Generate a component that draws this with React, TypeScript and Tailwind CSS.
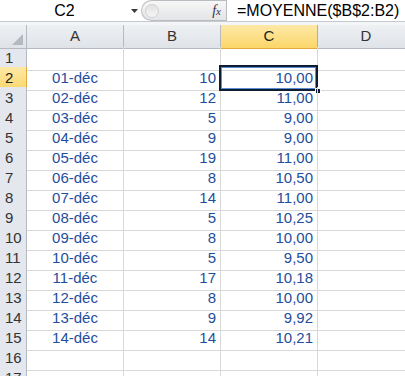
import React from 'react';

const rows: [string, string, string][] = [
  ['', '', ''],
  ['01-déc', '10', '10,00'],
  ['02-déc', '12', '11,00'],
  ['03-déc', '5', '9,00'],
  ['04-déc', '9', '9,00'],
  ['05-déc', '19', '11,00'],
  ['06-déc', '8', '10,50'],
  ['07-déc', '14', '11,00'],
  ['08-déc', '5', '10,25'],
  ['09-déc', '8', '10,00'],
  ['10-déc', '5', '9,50'],
  ['11-déc', '17', '10,18'],
  ['12-déc', '8', '10,00'],
  ['13-déc', '9', '9,92'],
  ['14-déc', '14', '10,21'],
  ['', '', ''],
  ['', '', ''],
];

const cols = ['A', 'B', 'C', 'D'];

export default function App() {
  return (
    <div
      className="w-[405px] h-[376px] overflow-hidden bg-white text-[15px]"
      style={{ fontFamily: '"Liberation Sans", Arial, sans-serif' }}
    >
      {/* formula bar */}
      <div className="flex h-[22px] items-stretch border-b border-[#c6cad0] bg-white">
        <div className="flex w-[127px] items-center justify-center pl-[2px] text-[16px] text-black">C2</div>
        <div className="flex w-[14px] items-center justify-center">
          <svg width="7" height="4" viewBox="0 0 7 4">
            <path d="M0 0h7L3.5 4z" fill="#3a3a3a" />
          </svg>
        </div>
        <div className="flex w-[85px] items-center justify-between rounded-l-[11px] border border-r-0 border-[#b9bcc1] bg-gradient-to-b from-[#f7f7f7] to-[#e3e4e6] pl-[3px] pr-[5px]">
          <div className="h-[14px] w-[14px] rounded-full bg-gradient-to-b from-[#e2e2e2] to-[#f6f6f6] border border-[#d2d2d2]" />
          <span
            className="text-[14px] italic text-[#3d2b4f]"
            style={{ fontFamily: '"Liberation Serif", serif' }}
          >
            f<span className="text-[11px]">x</span>
          </span>
        </div>
        <div className="flex flex-1 items-center border-l border-[#b9bcc1] pl-[10px] text-[16px] text-black whitespace-nowrap">
          =MOYENNE($B$2:B2)
        </div>
      </div>
      <div className="h-[3px] bg-[#f4f5f7]" />

      {/* column headers */}
      <div className="grid grid-cols-[27px_97px_97px_97px_97px] h-[22px]">
        <div className="relative border-r border-b border-[#b5bac1] bg-gradient-to-b from-[#eef0f3] to-[#dfe3e8]">
          <svg className="absolute right-[3px] bottom-[3px]" width="11" height="11" viewBox="0 0 11 11">
            <path d="M11 0V11H0z" fill="#b4b9c0" />
          </svg>
        </div>
        {cols.map(c => (
          <div
            key={c}
            className={
              c === 'C'
                ? 'flex items-center justify-center border-r border-b border-[#e3a93b] bg-gradient-to-b from-[#fde9a6] to-[#fbd668] text-[#222]'
                : 'flex items-center justify-center border-r border-b border-[#b5bac1] bg-gradient-to-b from-[#eef0f3] to-[#dfe3e8] text-[#333]'
            }
          >
            {c}
          </div>
        ))}
      </div>

      {/* rows */}
      {rows.map((r, i) => {
        const n = i + 1;
        const sel = n === 2;
        return (
          <div key={n} className="grid grid-cols-[27px_97px_97px_97px_97px] h-[20px]">
            <div
              className={
                sel
                  ? 'flex items-center pl-[5px] border-r border-b border-[#e3a93b] bg-gradient-to-b from-[#fde9a6] to-[#fbd668] text-[#222]'
                  : 'flex items-center pl-[5px] border-r border-b border-[#b5bac1] bg-[#e4e8ee] text-[#333]'
              }
            >
              {n}
            </div>
            <div className="flex items-center justify-center border-r border-b border-[#d8d8d8] text-[#1f4e9c]">{r[0]}</div>
            <div className="flex items-center justify-end pr-[4px] border-r border-b border-[#d8d8d8] text-[#1f4e9c]">{r[1]}</div>
            <div className="relative flex items-center justify-end pr-[4px] border-r border-b border-[#d8d8d8] text-[#1f4e9c]">
              {r[2]}
              {sel && (
                <>
                  <div className="absolute left-[-2px] top-[-2px] right-[-1px] bottom-[-1px] border-2 border-[#0f1d33] shadow-[inset_0_0_0_1px_#5b8ed6]" />
                  <div className="absolute right-[-4px] bottom-[-4px] h-[6px] w-[6px] bg-[#0f1d33] border border-white" />
                </>
              )}
            </div>
            <div className="border-r border-b border-[#d8d8d8]" />
          </div>
        );
      })}
    </div>
  );
}
